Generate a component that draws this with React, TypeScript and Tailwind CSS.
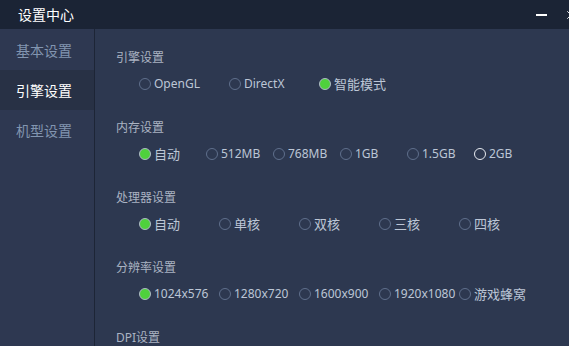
import { X } from 'lucide-react'

type Group = {
  title: string
  colWidth: string
  options: string[]
  selected: number
  hover?: number
}

const groups: Group[] = [
  { title: '引擎设置', colWidth: 'w-[90px]', options: ['OpenGL', 'DirectX', '智能模式'], selected: 2 },
  {
    title: '内存设置',
    colWidth: 'w-[67px]',
    options: ['自动', '512MB', '768MB', '1GB', '1.5GB', '2GB'],
    selected: 0,
    hover: 5,
  },
  { title: '处理器设置', colWidth: 'w-[80px]', options: ['自动', '单核', '双核', '三核', '四核'], selected: 0 },
  {
    title: '分辨率设置',
    colWidth: 'w-[80px]',
    options: ['1024x576', '1280x720', '1600x900', '1920x1080', '游戏蜂窝'],
    selected: 0,
  },
  { title: 'DPI设置', colWidth: 'w-[80px]', options: [], selected: -1 },
]

const menu = ['基本设置', '引擎设置', '机型设置']

const Radio = ({ checked, hover }: { checked: boolean; hover?: boolean }) => {
  if (checked) {
    return (
      <span className="w-[12px] h-[12px] rounded-full border border-[#aeb8c6] bg-[#4fd13c] shrink-0" />
    )
  }
  return (
    <span
      className={
        hover
          ? 'w-[12px] h-[12px] rounded-full border-[1.5px] border-[#e6eaf0] shrink-0'
          : 'w-[12px] h-[12px] rounded-full border border-[#5f6f8c] shrink-0'
      }
    />
  )
}

export default function App() {
  return (
    <div
      className="w-[569px] h-[346px] overflow-hidden bg-[#2d3850] flex flex-col"
      style={{ fontFamily: '"Noto Sans", "Noto Sans CJK SC", sans-serif' }}
    >
      {/* title bar */}
      <div className="h-[29px] shrink-0 bg-[#1b2435] flex items-center pl-[18px]">
        <span className="text-[14px] leading-[16px] text-white">设置中心</span>
        <span className="ml-auto w-[11px] h-[2px] bg-white" />
        <X className="ml-[17px] mr-[-9px] w-[14px] h-[14px] text-white shrink-0" strokeWidth={1.5} />
      </div>

      <div className="flex flex-1 min-h-0">
        {/* sidebar */}
        <div className="w-[95px] shrink-0 bg-[#2e3851] border-r border-[#1d2536] flex flex-col pt-px">
          {menu.map((m, i) => (
            <div
              key={m}
              className={
                i === 1
                  ? 'h-[40px] flex items-center pl-[16px] text-[14px] text-white bg-[#283145]'
                  : 'h-[40px] flex items-center pl-[16px] text-[14px] text-[#8295b0]'
              }
            >
              {m}
            </div>
          ))}
        </div>

        {/* content */}
        <div className="flex-1 pl-[21px] pt-[21px] flex flex-col">
          {groups.map((g) => (
            <div key={g.title} className="h-[70px] shrink-0 flex flex-col">
              <div className="text-[12px] leading-[16px] text-[#aab3c2]">{g.title}</div>
              <div className="mt-[10px] pl-[23px] flex">
                {g.options.map((o, i) => (
                  <div key={o} className={`${g.colWidth} flex items-center gap-[3px] h-[16px] whitespace-nowrap`}>
                    <Radio checked={i === g.selected} hover={i === g.hover} />
                    <span
                      className={
                        /[\u4e00-\u9fff]/.test(o)
                          ? 'text-[13px] leading-[16px] text-[#bcc6d6]'
                          : 'text-[12px] leading-[16px] text-[#bcc6d6]'
                      }
                    >
                      {o}
                    </span>
                  </div>
                ))}
              </div>
            </div>
          ))}
        </div>
      </div>
    </div>
  )
}
